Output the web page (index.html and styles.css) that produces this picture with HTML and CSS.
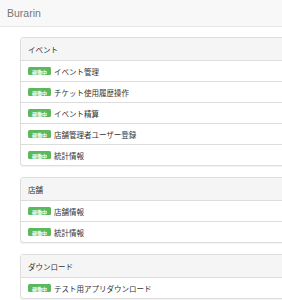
FILE: index.html
```html
<!DOCTYPE html>
<html lang="ja">
<head>
<meta charset="utf-8">
<link rel="stylesheet" href="styles.css">
</head>
<body>
<div class="navbar"><span class="brand">Burarin</span></div>
<div class="container">
  <div class="panel">
    <div class="panel-heading">イベント</div>
    <div class="item"><span class="badge">稼働中</span>イベント管理</div>
    <div class="item"><span class="badge">稼働中</span>チケット使用履歴操作</div>
    <div class="item"><span class="badge">稼働中</span>イベント精算</div>
    <div class="item"><span class="badge">稼働中</span>店舗管理者ユーザー登録</div>
    <div class="item"><span class="badge">稼働中</span>統計情報</div>
  </div>
  <div class="panel">
    <div class="panel-heading">店舗</div>
    <div class="item"><span class="badge">稼働中</span>店舗情報</div>
    <div class="item"><span class="badge">稼働中</span>統計情報</div>
  </div>
  <div class="panel">
    <div class="panel-heading">ダウンロード</div>
    <div class="item"><span class="badge">稼働中</span>テスト用アプリダウンロード</div>
  </div>
</div>
</body>
</html>
```
FILE: styles.css
```css
* { box-sizing: border-box; }
html, body { margin: 0; padding: 0; background: #fff; overflow: hidden; }
body {
  font-family: "Liberation Sans", "Noto Sans CJK JP", sans-serif;
  color: #333;
}
.navbar {
  height: 27px;
  background: #f8f8f8;
  border-bottom: 1px solid #e7e7e7;
  display: flex;
  align-items: center;
  padding-left: 7px;
}
.brand {
  font-size: 10.5px;
  color: #777;
  font-family: "Liberation Sans", sans-serif;
}
.container {
  padding: 10px 0 0 20px;
  width: 100%;
  overflow: hidden;
}
.panel {
  border: 1px solid #ddd;
  border-radius: 3px;
  margin-bottom: 11px;
  margin-right: -20px;
  background: #fff;
  box-shadow: 0 1px 1px rgba(0,0,0,0.05);
}
.panel-heading {
  height: 23px;
  background: #f5f5f5;
  border-bottom: 1px solid #ddd;
  display: flex;
  align-items: center;
  padding-left: 7px;
  font-family: "Noto Sans CJK JP", sans-serif;
  font-size: 7.5px;
  color: #333;
}
.item {
  height: 21px;
  border-top: 1px solid #ddd;
  display: flex;
  align-items: center;
  padding-left: 7px;
  font-family: "Noto Sans CJK JP", sans-serif;
  font-size: 7.5px;
  color: #333;
}
.panel-heading + .item { border-top: none; height: 20px; }
.badge {
  display: inline-flex;
  align-items: center;
  justify-content: center;
  width: 23px;
  height: 8px;
  background: #5cb85c;
  color: #fff;
  font-size: 5px;
  font-weight: bold;
  border-radius: 1.5px;
  margin-right: 3px;
}
```
